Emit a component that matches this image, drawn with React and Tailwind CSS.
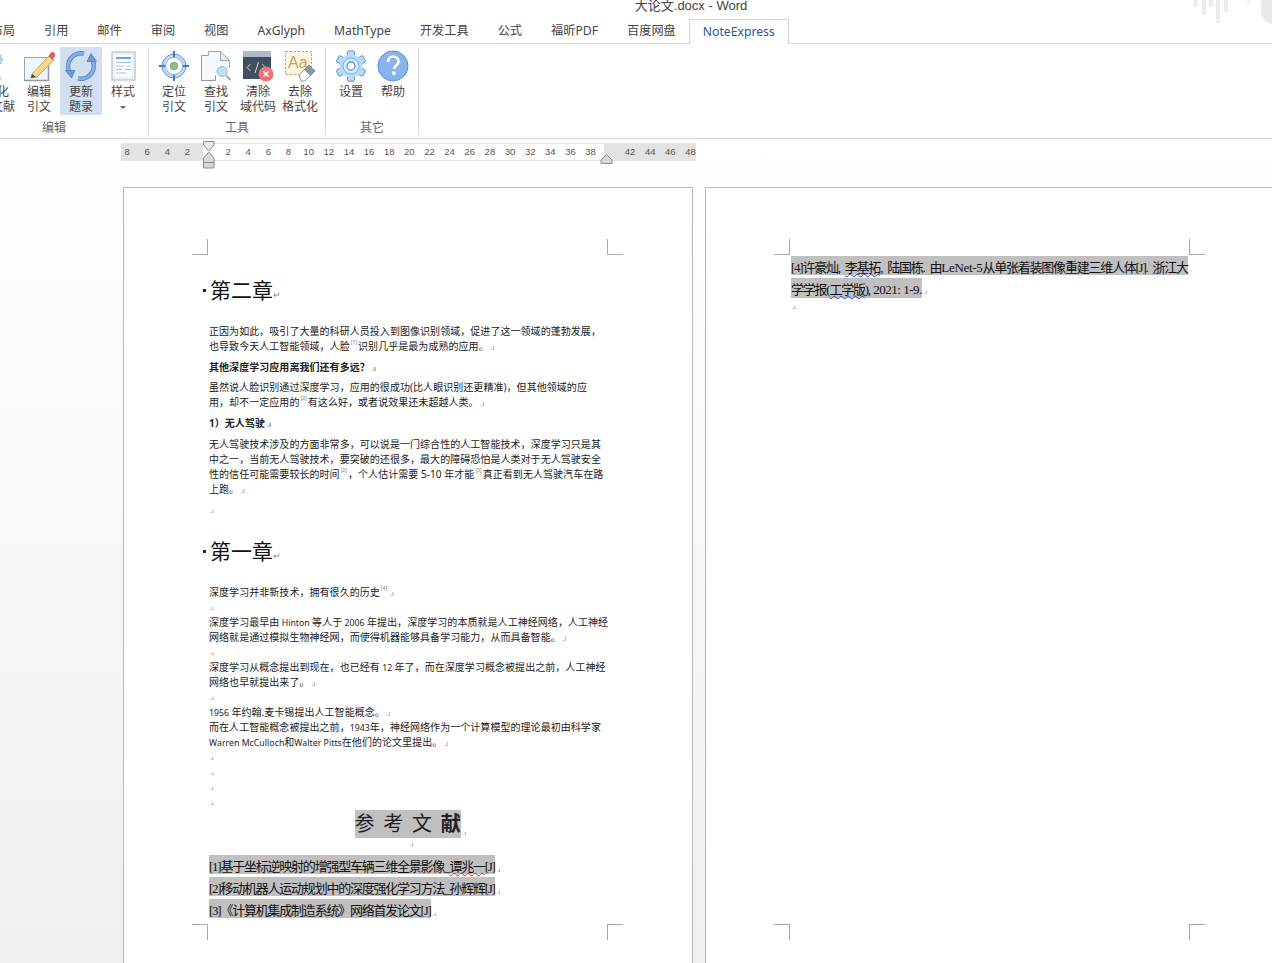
import React from 'react';

const tabs = ['引用', '邮件', '审阅', '视图', 'AxGlyph', 'MathType', '开发工具', '公式', '福昕PDF', '百度网盘'];

const FONT = "font-['Liberation_Sans','Noto_Sans_CJK_SC',sans-serif]";
const SERIF = "font-['Liberation_Serif','Noto_Sans_CJK_SC',serif]";

const EditIcon = () => (
  <svg width="32" height="32" viewBox="0 0 32 32">
    <rect x="1.500" y="7.500" width="24" height="23" fill="#eef6fc" stroke="#9aa5ae" />
    <path d="M1 30.500h25M25.500 8v23" stroke="#8e9aa4" strokeWidth="1.500" fill="none" />
    <path d="M9 24l17-18 5 4-17 17-6 1z" fill="#f7d98b" stroke="#caa454" />
    <path d="M9 24l-1 4 5-1z" fill="#444" />
    <path d="M26 6l2-3c1-1 2-1 3 0s1 3 0 4l-1.500 2.500z" fill="#e2606a" stroke="#b8434d" strokeWidth=".6" />
  </svg>
);

const RefreshIcon = () => (
  <svg width="32" height="32" viewBox="0 0 32 32" fill="none">
    <path d="M19 3.600A13 13 0 0 0 5 23" stroke="#4d7ebd" strokeWidth="4.500" />
    <path d="M19 3.600A13 13 0 0 0 5 23" stroke="#86aee6" strokeWidth="3" />
    <path d="M13 28.400A13 13 0 0 0 27 9" stroke="#4d7ebd" strokeWidth="4.500" />
    <path d="M13 28.400A13 13 0 0 0 27 9" stroke="#86aee6" strokeWidth="3" />
    <path d="M.5 20.500h9.500l-3.500 7.500z" fill="#6f9cd9" stroke="#4d7ebd" strokeWidth=".8" />
    <path d="M22 11.500h9.500L26 3.500z" fill="#6f9cd9" stroke="#4d7ebd" strokeWidth=".8" />
  </svg>
);

const StyleIcon = () => (
  <svg width="32" height="32" viewBox="0 0 32 32">
    <rect x="5" y="2" width="23" height="28" fill="#eef1f4" stroke="#c6ccd2" strokeWidth="1.500" />
    <rect x="8" y="5" width="17" height="22" fill="#fff" />
    <path d="M9 8h15" stroke="#6ea0e0" strokeWidth="2" />
    <path d="M9 12.500h15M9 16h8M20 16h4M9 19.500h6M18 19.500h6M9 23h10" stroke="#9dc0ea" strokeWidth="1.200" />
  </svg>
);

const TargetIcon = () => (
  <svg width="32" height="32" viewBox="0 0 32 32">
    <circle cx="16" cy="16" r="12" fill="#bcd9f4" stroke="#6c9bd4" strokeWidth="1" />
    <circle cx="16" cy="16" r="8.500" fill="#fff" stroke="#8db4e2" />
    <circle cx="16" cy="16" r="4" fill="#8dc08e" stroke="#6f9f70" strokeWidth=".6" />
    <path d="M16 1v6M16 25v6M1 16h6M25 16h6" stroke="#467bbd" strokeWidth="2" />
  </svg>
);

const FindIcon = () => (
  <svg width="32" height="32" viewBox="0 0 32 32">
    <path d="M1.500 5.500h14v25h-14z" fill="#f6f8fa" stroke="#8e9aa4" />
    <path d="M8.500 1.500h12l9 9v10h-13v5h-8z" fill="#f3f9fd" />
    <path d="M8.500 5V1.500h12l9 9V18" fill="none" stroke="#9aa5ae" />
    <path d="M20.500 1.500v9h9z" fill="#dfeef9" stroke="#9aa5ae" />
    <circle cx="22" cy="21.500" r="5" fill="#bfe0f5" stroke="#8fb9d8" />
    <path d="M26 25.500l4.500 4.500" stroke="#9aa5ae" strokeWidth="1.800" />
  </svg>
);

const ClearIcon = () => (
  <svg width="32" height="32" viewBox="0 0 32 32">
    <rect x="1" y="1" width="28" height="28" fill="#414f5e" />
    <rect x="1" y="1" width="28" height="6" fill="#a9bbcd" />
    <path d="M8.500 14l-3.500 3.500L8.500 21M20 14l3.500 3.500L20 21" stroke="#84b184" strokeWidth="1.100" fill="none" />
    <path d="M16.500 12l-3.500 11" stroke="#d9dfe4" strokeWidth="1" />
    <circle cx="24" cy="24" r="7.500" fill="#ef7278" />
    <path d="M21.500 21.500l5 5M26.500 21.500l-5 5" stroke="#fff" strokeWidth="1.500" />
  </svg>
);

const EraseIcon = () => (
  <svg width="32" height="32" viewBox="0 0 32 32">
    <rect x="1.500" y="1.500" width="26" height="23" fill="#fdf6e3" stroke="#c9a765" strokeDasharray="2.500 1.500" />
    <text x="4" y="18" fontSize="16" fill="#c9a05a" fontFamily="Liberation Sans">Aa</text>
    <path d="M15 25l10-10 6 6-10 10h-4z" fill="#fff" stroke="#8e9aa4" />
    <path d="M20.500 19.500l4.500-4.500 6 6-4.500 4.500z" fill="#8b98a6" stroke="#6d7a88" strokeWidth=".6" />
  </svg>
);

const GearIcon = () => (
  <svg width="32" height="32" viewBox="0 0 32 32">
    {[0, 60, 120, 180, 240, 300].map((a) => (
      <rect key={a} x="12.500" y=".8" width="7" height="8" rx="1.500" fill="#b7daf6" stroke="#5f97d6" transform={`rotate(${a} 16 16)`} />
    ))}
    <circle cx="16" cy="16" r="11.500" fill="#b7daf6" />
    <circle cx="16" cy="16" r="8" fill="#d7ebfa" stroke="#7caee0" />
    <circle cx="16" cy="16" r="4" fill="#fff" stroke="#5f97d6" strokeWidth="1.300" />
  </svg>
);

const HelpIcon = () => (
  <svg width="32" height="32" viewBox="0 0 32 32">
    <circle cx="16" cy="16" r="15" fill="#8ab4ec" stroke="#5f8fd0" />
    <path d="M11 12c0-3.500 2.500-5.500 5.300-5.500S21.500 8.500 21.500 11.500c0 3.800-4.300 4-4.300 7.500" stroke="#fff" strokeWidth="2.700" fill="none" />
    <rect x="15.400" y="21.500" width="3.200" height="3.400" fill="#fff" />
  </svg>
);

// only a sliver of this one stays on screen
const SparkleIcon = () => (
  <svg width="32" height="32" viewBox="0 0 32 32">
    <path d="M22 3l1.500 3 3-1-1 3 3 1.500-3 1.500 1 3-3-1-1.500 3-1.500-3-3 1 1-3-3-1.500 3-1.500-1-3 3 1z" fill="#a9d3f5" stroke="#7db3e4" strokeWidth=".6" />
    <path d="M25 26l1.500 2.500L25 31l-1.500-2.500z" fill="#a9d3f5" />
  </svg>
);

const RibbonButton = ({ icon, lines, active, caret, className = '' }) => (
  <div className={`flex h-[68px] shrink-0 flex-col items-center pt-[3px] ${active ? 'bg-[#d2dff0]' : ''} ${className || 'w-[42px]'}`}>
    <div className="flex h-[32px] w-[32px] justify-center">{icon}</div>
    <div className="mt-[3px] whitespace-nowrap text-center text-[12px] leading-[15px] text-[#444]">
      {lines.map((l) => (
        <div key={l}>{l}</div>
      ))}
    </div>
    {caret && <div className="mt-[6px] h-0 w-0 border-x-[3px] border-t-[3px] border-x-transparent border-t-[#666]" />}
  </div>
);

const RibbonGroup = ({ label, children, className = '' }) => (
  <div className={`flex h-[88px] flex-col items-center border-r border-[#d8d8d8] ${className}`}>
    <div className="flex">{children}</div>
    <div className="mt-[6px] text-[12px] leading-[15px] text-[#666]">{label}</div>
  </div>
);

const RulerCells = ({ nums }) =>
  nums.map((n) => (
    <span key={n} className="w-[20.15px] shrink-0 text-center text-[9.5px] leading-[18px] text-[#555]">
      {n}
    </span>
  ));

const Ruler = () => (
  <div className="relative mt-[4px] flex h-[18px] pl-[121px]">
    <div className="flex w-[82px] overflow-hidden bg-[#e3e3e3]">
      <div className="ml-[-4px] flex">
        <RulerCells nums={[8, 6, 4, 2]} />
      </div>
    </div>
    <div className="flex w-[401px] overflow-hidden border-y border-[#e3e3e3] bg-white pl-[15px]">
      <div className="mt-[-1px] flex">
        <RulerCells nums={[2, 4, 6, 8, 10, 12, 14, 16, 18, 20, 22, 24, 26, 28, 30, 32, 34, 36, 38]} />
      </div>
    </div>
    <div className="flex w-[92px] bg-[#e3e3e3] pl-[16px]">
      <RulerCells nums={[42, 44, 46, 48]} />
    </div>
    {/* indent markers */}
    <svg className="absolute left-[203px] top-[-2px]" width="12" height="28" viewBox="0 0 12 28">
      <path d="M.5.500h10.500v3.500l-5.250 6-5.250-6z" fill="#e8e8e8" stroke="#8c8c8c" />
      <path d="M5.750 11l5.250 6v10H.5V17z" fill="#d8d8d8" stroke="#8c8c8c" />
      <path d="M.5 21.500h10.500" stroke="#8c8c8c" />
    </svg>
    <svg className="absolute left-[600px] top-[11px]" width="13" height="10" viewBox="0 0 13 10">
      <path d="M6.500.500l5.500 5.500v3.500H1V6z" fill="#d8d8d8" stroke="#8c8c8c" />
    </svg>
  </div>
);

const Crop = ({ className, h, v }) => (
  <div className={`absolute h-[16px] w-[16px] border-[#a8a8a8] ${h} ${v} ${className}`} />
);

const Mark = ({ className = '' }) => (
  <span className={`ml-[2px] inline-block align-baseline text-[7px] leading-none text-[#888] ${className}`}>.ı</span>
);

const Sup = ({ n }) => (
  <sup className="mx-[1px] align-[4px] text-[5px] leading-none text-[#777]">[{n}]</sup>
);

const Line = ({ children, className = '' }) => (
  <div className={`h-[15px] whitespace-nowrap font-['Noto_Sans','Noto_Sans_CJK_SC',sans-serif] text-[10px] leading-[15px] tracking-[0.05px] text-[#222] ${className}`}>
    {children}
  </div>
);

// latin runs in the second chapter are set smaller than the CJK around them
const Lat = ({ children }) => <span className="text-[8.7px]">{children}</span>;

const Empty = ({ className = '' }) => (
  <div className={`flex h-[15px] items-start pt-[5px] ${className}`}>
    <Mark className="ml-px" />
  </div>
);

const Heading = ({ children, className = '' }) => (
  <div className={`relative h-[30px] whitespace-nowrap pl-px text-[21px] leading-[30px] text-[#111] ${className}`}>
    <span className="absolute left-[-6px] top-[13px] h-[3px] w-[3px] bg-[#222]" />
    {children}
    <span className="text-[9px] text-[#888]">↵</span>
  </div>
);

const Ref = ({ children, mark }) => (
  <div className="flex h-[22px] items-end pb-[3px]">
    <span className="block h-[19px] whitespace-nowrap bg-[#c0c0c0] text-[13px] leading-[23px] tracking-[-1.23px] text-[#111]">
      {children}
    </span>
    {mark && <Mark />}
  </div>
);

const Wavy = ({ color, children }) => (
  <span className={`underline decoration-wavy decoration-1 underline-offset-[1px] ${color}`}>{children}</span>
);

const PageOne = () => (
  <div className="relative h-[776px] w-[570px] shrink-0 border-x border-t border-[#b9b9b9] bg-white pl-[85px] pt-[88px]">
    <Crop className="left-[68px] top-[51px]" h="border-b" v="border-r" />
    <Crop className="left-[483px] top-[51px]" h="border-b" v="border-l" />
    <Crop className="left-[68px] top-[736px]" h="border-t" v="border-r" />
    <Crop className="left-[483px] top-[736px]" h="border-t" v="border-l" />

    <Heading>第二章</Heading>
    <div className="mt-[18px]">
      <Line>正因为如此，吸引了大量的科研人员投入到图像识别领域，促进了这一领域的蓬勃发展，</Line>
      <Line>也导致今天人工智能领域，人脸<Sup n={1} />识别几乎是最为成熟的应用。<Mark /></Line>
      <Line className="mt-[6px] font-bold">其他深度学习应用离我们还有多远？<Mark /></Line>
      <Line className="mt-[5px]">虽然说人脸识别通过深度学习，应用的很成功(比人眼识别还更精准)，但其他领域的应</Line>
      <Line>用，却不一定应用的<Sup n={2} />有这么好，或者说效果还未超越人类。<Mark /></Line>
      <Line className="mt-[6px] font-bold">1）无人驾驶<Mark /></Line>
      <Line className="mt-[6px]">无人驾驶技术涉及的方面非常多，可以说是一门综合性的人工智能技术，深度学习只是其</Line>
      <Line>中之一，当前无人驾驶技术，要突破的还很多，最大的障碍恐怕是人类对于无人驾驶安全</Line>
      <Line>性的信任可能需要较长的时间<Sup n={2} />，个人估计需要 5-10 年才能<Sup n={3} />真正看到无人驾驶汽车在路</Line>
      <Line>上跑。<Mark /></Line>
      <Empty className="mt-[6px]" />
    </div>
    <Heading className="mt-[19px]">第一章</Heading>
    <div className="mt-[18px]">
      <Line>深度学习并非新技术，拥有很久的历史<Sup n={4} /><Mark /></Line>
      <Empty />
      <Line>深度学习最早由<Lat> Hinton </Lat>等人于<Lat> 2006 </Lat>年提出，深度学习的本质就是人工神经网络，人工神经</Line>
      <Line>网络就是通过模拟生物神经网，而使得机器能够具备学习能力，从而具备智能。<Mark /></Line>
      <Empty />
      <Line>深度学习从概念提出到现在，也已经有<Lat> 12 </Lat>年了，而在深度学习概念被提出之前，人工神经</Line>
      <Line>网络也早就提出来了。<Mark /></Line>
      <Empty />
      <Line><Lat>1956 </Lat>年约翰.麦卡锡提出人工智能概念。<Mark /></Line>
      <Line>而在人工智能概念被提出之前，<Lat>1943</Lat>年，神经网络作为一个计算模型的理论最初由科学家</Line>
      <Line><Lat>Warren McCulloch</Lat>和<Lat>Walter Pitts</Lat>在他们的论文里提出。<Mark /></Line>
      <Empty />
      <Empty />
      <Empty />
      <Empty />
    </div>
    <div className="flex w-[401px] justify-center pl-[2px]">
      <span className="block h-[28px] whitespace-nowrap bg-[#c0c0c0] text-[20px] leading-[28px] text-[#222]">
        <span className="tracking-[8.7px]">参考文</span>
        <span className="font-bold">献</span>
      </span>
      <Mark className="mt-[20px]" />
    </div>
    <div className="flex h-[17px] w-[403px] justify-center pt-[3px]">
      <Mark />
    </div>
    <Ref mark>[1]基于坐标逆映射的增强型车辆三维全景影像_<Wavy color="decoration-[#e02020]">谭兆一</Wavy>[J]</Ref>
    <Ref mark>[2]移动机器人运动规划中的深度强化学习方法_孙辉辉[J]</Ref>
    <Ref mark>[3]《计算机集成制造系统》网络首发论文[J]</Ref>
  </div>
);

const PageTwo = () => (
  <div className="relative ml-[12px] h-[776px] min-w-0 flex-1 border-l border-t border-[#b9b9b9] bg-white pl-[85px] pt-[68px]">
    <Crop className="left-[68px] top-[51px]" h="border-b" v="border-r" />
    <Crop className="left-[483px] top-[51px]" h="border-b" v="border-l" />
    <Crop className="left-[68px] top-[736px]" h="border-t" v="border-r" />
    <Crop className="left-[483px] top-[736px]" h="border-t" v="border-l" />
    <div className="flex h-[22px] items-start">
      <span className="block h-[19px] whitespace-nowrap bg-[#c0c0c0] text-[13px] leading-[23px] tracking-[-1.23px] text-[#111]">
        [4]许豪灿,
        <Wavy color="decoration-[#2040d0] ml-[5px]">李基拓</Wavy>,
        <span className="ml-[5px]">陆国栋.</span>
        <span className="ml-[5px]">由</span>
        <span className="tracking-[-0.3px]">LeNet-5</span>从单张着装图像重建三维人体[J].
        <span className="ml-[5px]">浙江大</span>
      </span>
    </div>
    <div className="flex h-[22px] items-start">
      <span className="block h-[20px] whitespace-nowrap bg-[#c0c0c0] text-[13px] leading-[23px] tracking-[-1.23px] text-[#111]">
        学学报(<Wavy color="decoration-[#2040d0]">工学版</Wavy>)
        <span className="tracking-[-0.5px]">, 2021: 1-9.</span>
      </span>
      <Mark className="mt-[11px]" />
    </div>
    <Empty className="mt-[-1px]" />
  </div>
);

export default function App() {
  return (
    <div className={`h-[963px] w-[1272px] overflow-hidden bg-white ${FONT}`}>
      {/* Title */}
      <div className="relative flex h-[19px] justify-center pl-[110px]">
        <span className="mt-[-3px] text-[13px] leading-[18px] text-[#444]">大论文.docx - Word</span>
        <svg className="absolute right-0 top-0" width="84" height="26" viewBox="0 0 84 26">
          <path d="M7.500 0v7M16 0v15M23 0v7M30 0v23M38 0v12" stroke="#ececec" strokeWidth="4" />
          <path d="M58 0l4 5V0z" fill="#f0f0f0" />
          <path d="M73 0h11v24c-6-2-11-6-11-12z" fill="#e9e9e9" />
        </svg>
      </div>

      {/* Tabs */}
      <div className="flex h-[25px] items-stretch gap-[29px] border-b border-[#d4d4d4] font-['Noto_Sans','Noto_Sans_CJK_SC',sans-serif] text-[12.2px]">
        <span className="ml-[-9.4px] pt-[4px] leading-[16px] text-[#444]">布局</span>
        {tabs.map((t) => (
          <span key={t} className="pt-[4px] leading-[16px] text-[#444]">{t}</span>
        ))}
        <span className="ml-[-16px] h-[25px] w-[100px] border-x border-t border-[#d4d4d4] bg-white pt-[4px] text-center leading-[16px] text-[#2b579a]">
          NoteExpress
        </span>
      </div>

      {/* Ribbon */}
      <div className="flex h-[95px] border-b border-[#d4d4d4] pt-[3px]">
        <RibbonGroup label="编辑" className="ml-[-36px] pr-[4px]">
          <RibbonButton className="w-[54px]" icon={<SparkleIcon />} lines={['格式化', '参考文献']} />
          <RibbonButton icon={<EditIcon />} lines={['编辑', '引文']} />
          <RibbonButton active icon={<RefreshIcon />} lines={['更新', '题录']} />
          <RibbonButton caret icon={<StyleIcon />} lines={['样式']} />
        </RibbonGroup>
        <RibbonGroup label="工具" className="px-[4px]">
          <RibbonButton icon={<TargetIcon />} lines={['定位', '引文']} />
          <RibbonButton icon={<FindIcon />} lines={['查找', '引文']} />
          <RibbonButton icon={<ClearIcon />} lines={['清除', '域代码']} />
          <RibbonButton icon={<EraseIcon />} lines={['去除', '格式化']} />
        </RibbonGroup>
        <RibbonGroup label="其它" className="px-[4px]">
          <RibbonButton icon={<GearIcon />} lines={['设置']} />
          <RibbonButton icon={<HelpIcon />} lines={['帮助']} />
        </RibbonGroup>
      </div>

      {/* Document area */}
      <div className="h-[824px] bg-gradient-to-b from-white to-[#efefef]">
        <Ruler />
        <div className={`mt-[26px] flex pl-[123px] ${SERIF}`}>
          <PageOne />
          <PageTwo />
        </div>
      </div>
    </div>
  );
}
